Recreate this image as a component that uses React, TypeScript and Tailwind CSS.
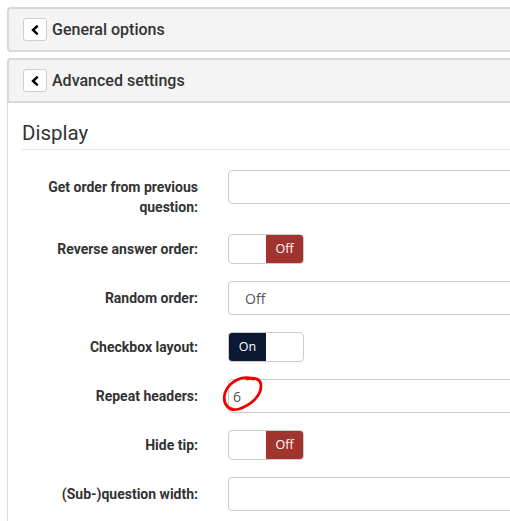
import React from 'react';

const ROBOTO = { fontFamily: 'Roboto, "Liberation Sans", sans-serif' };

function Chevron() {
  return (
    <svg width="10" height="10" viewBox="0 0 10 10">
      <path d="M6.8 1.5 L3 5 L6.8 8.5" fill="none" stroke="#000" strokeWidth="2.4" strokeLinecap="square" />
    </svg>
  );
}

function PanelHeader({ title, last }: { title: string; last?: boolean }) {
  return (
    <div
      className={`h-[45px] flex items-center pl-[14px] bg-[#f4f4f4] border-2 border-[#d8d8d8] ${
        last ? 'rounded-t-[4px]' : 'rounded-[4px]'
      }`}
    >
      <button className="w-[24px] h-[23px] flex items-center justify-center bg-white border border-[#cfcfcf] rounded-[3px]">
        <Chevron />
      </button>
      <span className="ml-[5px] text-[16px] font-medium text-[#333]">{title}</span>
    </div>
  );
}

function Label({ children }: { children: React.ReactNode }) {
  return (
    <div className="w-[176px] shrink-0 text-right pt-[7px] text-[14px] leading-[20px] font-bold text-[#333]">
      {children}
    </div>
  );
}

function TextInput({ value, pad = 'pl-[12px]', children }: { value?: string; pad?: string; children?: React.ReactNode }) {
  return (
    <div
      className={`relative w-[520px] h-[34px] border border-[#cccccc] rounded-[4px] bg-white flex items-center ${pad} text-[14px] text-[#555]`}
      style={{ fontFamily: '"Open Sans", "Liberation Sans", sans-serif' }}
    >
      {value}
      {children}
    </div>
  );
}

function Toggle({ on }: { on: boolean }) {
  return (
    <div className="h-[34px] pt-[2px]">
      <div
        className="w-[76px] h-[30px] border border-[#cccccc] rounded-[4px] overflow-hidden flex text-[12.5px] text-white bg-white"
        style={{ fontFamily: '"Open Sans", "Liberation Sans", sans-serif' }}
      >
        {on ? (
          <>
            <div className="w-1/2 h-full bg-[#0b1933] flex items-center justify-center">On</div>
            <div className="w-1/2 h-full" />
          </>
        ) : (
          <>
            <div className="w-1/2 h-full" />
            <div className="w-1/2 h-full bg-[#a2342f] flex items-center justify-center">Off</div>
          </>
        )}
      </div>
    </div>
  );
}

function Row({ label, children }: { label: React.ReactNode; children: React.ReactNode }) {
  return (
    <div className="flex gap-[30px] mb-[15px]">
      <Label>{label}</Label>
      <div>{children}</div>
    </div>
  );
}

export default function App() {
  return (
    <div className="w-[510px] h-[521px] overflow-hidden bg-white" style={ROBOTO}>
      <div className="w-[900px] pt-[7px] pl-[7px]">
        <PanelHeader title="General options" />
        <div className="mt-[6px]">
          <PanelHeader title="Advanced settings" last />
          <div className="border-l border-[#dddddd] pl-[14px] pt-[18px] pb-[40px]">
            <div className="pb-[4px] border-b border-[#e5e5e5]">
              <h2 className="text-[20.5px] leading-[24px] text-[#333]">Display</h2>
            </div>
            <div className="mt-[20px]">
              <Row label={<>Get order from previous<br />question:</>}>
                <TextInput />
              </Row>
              <Row label="Reverse answer order:">
                <Toggle on={false} />
              </Row>
              <Row label="Random order:">
                <TextInput value="Off" pad="pl-[16px]" />
              </Row>
              <Row label="Checkbox layout:">
                <Toggle on />
              </Row>
              <Row label="Repeat headers:">
                <TextInput value="6" pad="pl-[4px]">
                  {/* hand-drawn annotation */}
                  <svg className="absolute left-[-8px] top-[-6px]" width="44" height="42" viewBox="0 0 44 42">
                    <path
                      d="M32 5 C22 1, 8 7, 4 19 C1 30, 8 38, 18 35 C30 31, 40 22, 40 12 C40 5, 34 3, 26 5"
                      fill="none"
                      stroke="#ee0000"
                      strokeWidth="2.8"
                      strokeLinecap="round"
                    />
                  </svg>
                </TextInput>
              </Row>
              <Row label="Hide tip:">
                <Toggle on={false} />
              </Row>
              <Row label="(Sub-)question width:">
                <TextInput />
              </Row>
            </div>
          </div>
        </div>
      </div>
    </div>
  );
}
